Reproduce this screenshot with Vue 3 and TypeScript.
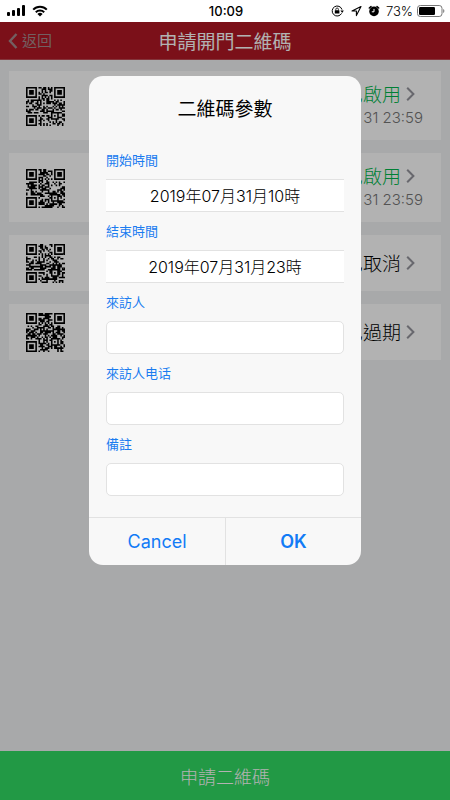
<script setup lang="ts">
import { reactive } from 'vue'

interface Pass {
  id: number
  status: string
  tone: 'active' | 'plain'
  expires?: string
}

interface Field {
  key: 'visitor' | 'phone' | 'remark'
  label: string
}

const passes: Pass[] = [
  { id: 11, status: '已啟用', tone: 'active', expires: '31 23:59' },
  { id: 29, status: '已啟用', tone: 'active', expires: '31 23:59' },
  { id: 47, status: '已取消', tone: 'plain' },
  { id: 83, status: '已過期', tone: 'plain' },
]

const fields: Field[] = [
  { key: 'visitor', label: '來訪人' },
  { key: 'phone', label: '來訪人电话' },
  { key: 'remark', label: '備註' },
]

const form = reactive({
  start: '2019年07月31月10時',
  end: '2019年07月31月23時',
  visitor: '',
  phone: '',
  remark: '',
})

const SIZE = 25

// Concentric square pattern: dark border, light ring, dark centre.
function ring(row: number, col: number, top: number, left: number, size: number): boolean | null {
  const r = row - top
  const c = col - left
  if (r < 0 || c < 0 || r >= size || c >= size) return null
  const edge = Math.min(r, c, size - 1 - r, size - 1 - c)
  return edge !== 1
}

function qrPath(seed: number): string {
  let state = seed * 7919 + 17
  let path = ''
  for (let row = 0; row < SIZE; row++) {
    for (let col = 0; col < SIZE; col++) {
      state = (Math.imul(state, 1664525) + 1013904223) >>> 0
      let dark = (state >>> 16) % 100 < 52
      const quiet = (row < 8 && (col < 8 || col > 16)) || (row > 16 && col < 8)
      if (quiet) dark = false
      else if (row === 6 || col === 6) dark = (row + col) % 2 === 0
      const fixed =
        ring(row, col, 0, 0, 7) ??
        ring(row, col, 0, 18, 7) ??
        ring(row, col, 18, 0, 7) ??
        ring(row, col, 16, 16, 5)
      if (fixed !== null) dark = fixed
      if (dark) path += `M${col} ${row}h1v1h-1z`
    }
  }
  return path
}
</script>

<template>
  <div class="screen">
    <div class="statusbar">
      <div class="side">
        <svg width="18" height="12" viewBox="0 0 18 12" aria-hidden="true">
          <rect x="0" y="7" width="3" height="4" rx="1" />
          <rect x="5" y="5" width="3" height="6" rx="1" />
          <rect x="10" y="3" width="3" height="8" rx="1" />
          <rect x="15" y="0" width="3" height="11" rx="1" />
        </svg>
        <svg class="wifi" width="16" height="12" viewBox="0 0 16 12" aria-hidden="true">
          <path d="M1.2 4.6a9.6 9.6 0 0 1 13.6 0M3.8 7.2a6 6 0 0 1 8.4 0" fill="none" stroke="#000" stroke-width="2" />
          <path d="M8 11.6 5.4 9a3.7 3.7 0 0 1 5.2 0z" />
        </svg>
      </div>
      <span class="clock">10:09</span>
      <div class="side end">
        <svg width="13" height="12" viewBox="0 0 13 12" aria-hidden="true">
          <path d="M10.6 8.4A5 5 0 1 1 11 4.6" fill="none" stroke="#000" stroke-width="1" />
          <path d="M9.4 5.4h3.4L11.2 8z" />
          <rect x="3.8" y="5.2" width="4.6" height="3.4" rx=".4" />
          <path d="M4.8 5.4V4.3a1.3 1.3 0 0 1 2.6 0v1.1" fill="none" stroke="#000" stroke-width=".8" />
        </svg>
        <svg class="arrow" width="11" height="12" viewBox="0 0 11 12" aria-hidden="true">
          <path d="M10 1.5 1 6h4.4v4.6z" fill="none" stroke="#000" stroke-width="1.1" stroke-linejoin="round" />
        </svg>
        <svg class="alarm" width="12" height="12" viewBox="0 0 12 12" aria-hidden="true">
          <circle cx="6" cy="6.4" r="4.8" />
          <path d="M1.3 3 3 1.6M10.7 3 9 1.6" stroke="#000" stroke-width="1.5" stroke-linecap="round" />
          <path d="M6 3.9v2.9H3.8" fill="none" stroke="#fff" stroke-width="1" />
        </svg>
        <span class="percent">73%</span>
        <svg width="28" height="12" viewBox="0 0 28 12" aria-hidden="true">
          <rect x=".5" y=".5" width="24.5" height="11" rx="2.8" fill="#fff" stroke="#777" />
          <rect x="2" y="2" width="16" height="8" rx="1.2" />
          <path d="M26.2 4v4c1.6-.6 1.6-3.4 0-4z" fill="#777" />
        </svg>
      </div>
    </div>

    <div class="stage">
      <header class="navbar">
        <button class="back" type="button">
          <svg width="10" height="16" viewBox="0 0 10 16" aria-hidden="true">
            <path d="M8.5 1 2 8l6.5 7" fill="none" stroke="currentColor" stroke-width="2.4" />
          </svg>
          <span>返回</span>
        </button>
        <h1>申請開門二維碼</h1>
      </header>

      <main class="list">
        <a v-for="pass in passes" :key="pass.id" class="card" :class="{ tall: pass.expires }" href="#">
          <svg class="qr" viewBox="0 0 25 25" aria-hidden="true">
            <path :d="qrPath(pass.id)" />
          </svg>
          <span class="info">
            <span class="status" :class="pass.tone">
              {{ pass.status }}
              <svg width="9" height="14" viewBox="0 0 9 14" aria-hidden="true">
                <path d="M1.2.8 7.4 7l-6.2 6.2" fill="none" stroke="#96969e" stroke-width="2" />
              </svg>
            </span>
            <span v-if="pass.expires" class="date">{{ pass.expires }}</span>
          </span>
        </a>
      </main>

      <button class="apply" type="button">申請二維碼</button>

      <div class="backdrop">
        <form class="dialog" role="dialog" aria-labelledby="dialog-title" @submit.prevent>
          <h2 id="dialog-title">二維碼參數</h2>
          <div class="fields">
            <label for="start">開始時間</label>
            <input id="start" v-model="form.start" class="time" type="text" readonly />
            <label for="end">結束時間</label>
            <input id="end" v-model="form.end" class="time" type="text" readonly />
            <template v-for="field in fields" :key="field.key">
              <label :for="field.key">{{ field.label }}</label>
              <input :id="field.key" v-model="form[field.key]" class="box" type="text" />
            </template>
          </div>
          <div class="actions">
            <button type="button">Cancel</button>
            <button class="primary" type="submit">OK</button>
          </div>
        </form>
      </div>
    </div>
  </div>
</template>

<style>
body {
  margin: 0;
  background: #fff;
}
</style>

<style scoped>
.screen {
  display: flex;
  flex-direction: column;
  min-height: 100vh;
  font-family: Inter, "Noto Sans CJK TC", "Noto Sans CJK SC", sans-serif;
  color: #000;
}

.screen *,
.screen {
  box-sizing: border-box;
}

svg {
  display: block;
  flex: none;
}

button,
input {
  margin: 0;
  border: 0;
  padding: 0;
  background: none;
  font: inherit;
  color: inherit;
}

.statusbar {
  display: grid;
  grid-template-columns: 1fr auto 1fr;
  align-items: center;
  height: 22px;
  padding: 0 5px 0 7px;
}

.side {
  display: flex;
  align-items: center;
}

.end {
  justify-content: flex-end;
}

.wifi {
  margin-left: 7px;
}

.arrow {
  margin-left: 7px;
}

.alarm {
  margin-left: 6px;
}

.clock {
  font-size: 13px;
  font-weight: 500;
}

.percent {
  margin: 0 4px 0 6px;
  font-size: 13px;
  font-weight: 300;
}

.stage {
  position: relative;
  display: flex;
  flex: 1;
  flex-direction: column;
  background: #f1f2f4;
}

.navbar {
  display: grid;
  grid-template-columns: 1fr auto 1fr;
  align-items: center;
  height: 38px;
  padding: 0 8px;
  background: #b01824;
  border-bottom: 1px solid #bd4c55;
}

.navbar h1,
.dialog h2,
.status {
  font-family: "Noto Sans CJK TC", "Noto Sans CJK SC", sans-serif;
}

.navbar h1 {
  margin: 0;
  font-size: 19px;
  font-weight: 400;
  line-height: 26px;
  color: #fff;
}

.back {
  display: flex;
  align-items: center;
  gap: 4px;
  font-size: 15px;
  line-height: 22px;
  color: #a5898c;
}

.list {
  display: flex;
  flex: 1;
  flex-direction: column;
  gap: 13px;
  padding: 11px 9px;
}

.card {
  display: flex;
  align-items: center;
  justify-content: space-between;
  padding: 8px 18px 8px 17px;
  background: #fff;
  color: #000;
  text-decoration: none;
}

.tall {
  padding-top: 11px;
  padding-bottom: 10px;
}

.qr {
  width: 39px;
  height: 39px;
}

.info {
  display: flex;
  flex-direction: column;
  align-items: flex-end;
}

.status {
  display: flex;
  align-items: center;
  gap: 5px;
  margin-right: 8px;
  font-size: 19px;
  font-weight: 300;
  line-height: 24px;
}

.plain {
  line-height: 40px;
}

.active {
  color: #00b84c;
}

.date {
  font-size: 15px;
  font-weight: 300;
  line-height: 24px;
  color: #777;
}

.apply {
  height: 49px;
  background: #32db64;
  color: #fff;
  font-size: 18px;
  font-weight: 300;
}

.backdrop {
  position: absolute;
  inset: 0;
  display: flex;
  align-items: flex-start;
  justify-content: center;
  padding-top: 54px;
  background: rgba(0, 0, 0, 0.3);
}

.dialog {
  width: 272px;
  max-width: 90%;
  overflow: hidden;
  border-radius: 14px;
  background: #f8f8f8;
}

.dialog h2 {
  margin: 0;
  padding: 18px 16px 0;
  font-size: 19px;
  font-weight: 400;
  line-height: 28px;
  text-align: center;
}

.fields {
  display: flex;
  flex-direction: column;
  gap: 10px;
  padding: 29px 17px 21px;
}

.fields label {
  font-size: 13px;
  font-weight: 400;
  line-height: 18px;
  color: #1a7cf0;
}

.fields input {
  width: 100%;
  height: 33px;
  background: #fff;
  outline: none;
}

.fields .time {
  border-top: 1px solid #e2e2e2;
  border-bottom: 1px solid #e2e2e2;
  padding-bottom: 2px;
  font-size: 16px;
  font-weight: 300;
  text-align: center;
}

.fields .box {
  border: 1px solid #e2e2e2;
  border-radius: 5px;
  padding: 0 8px;
  font-size: 16px;
}

.actions {
  display: grid;
  grid-template-columns: 1fr 1fr;
  border-top: 1px solid #e2e2e2;
}

.actions button {
  height: 47px;
  color: #127bf6;
  font-size: 18px;
  font-weight: 400;
}

.actions .primary {
  border-left: 1px solid #e2e2e2;
  font-weight: 600;
}
</style>
